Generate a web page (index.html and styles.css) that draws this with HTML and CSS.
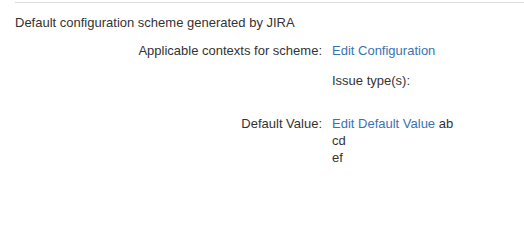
FILE: index.html
```html
<!DOCTYPE html>
<html>
<head>
<meta charset="utf-8">
<link rel="stylesheet" href="styles.css">
</head>
<body>
<div class="page">
  <div class="rule"></div>
  <p class="title">Default configuration scheme generated by JIRA</p>
  <div class="grid">
    <div class="label">Applicable contexts for scheme:</div>
    <div class="value">
      <a class="link" href="#">Edit Configuration</a>
      <div class="issue">Issue type(s):</div>
    </div>
    <div class="label row2">Default Value:</div>
    <div class="value row2"><a class="link" href="#">Edit Default Value</a> ab<br>cd<br>ef</div>
  </div>
</div>
</body>
</html>
```
FILE: styles.css
```css
html, body {
  margin: 0;
  padding: 0;
  background: #fff;
}
body {
  font-family: Arial, "Liberation Sans", sans-serif;
  font-size: 13px;
  line-height: 17px;
  color: #333;
}
.page {
  padding: 2px 0 0 15px;
}
.rule {
  border-top: 1px solid #dddddd;
}
.title {
  margin: 11px 0 0 0;
}
.grid {
  display: grid;
  grid-template-columns: 307px 1fr;
  column-gap: 10px;
  margin-top: 11px;
}
.label {
  text-align: right;
}
.link {
  color: #3b73af;
  text-decoration: none;
}
.issue {
  margin-top: 13px;
}
.row2 {
  margin-top: 26px;
}
```
